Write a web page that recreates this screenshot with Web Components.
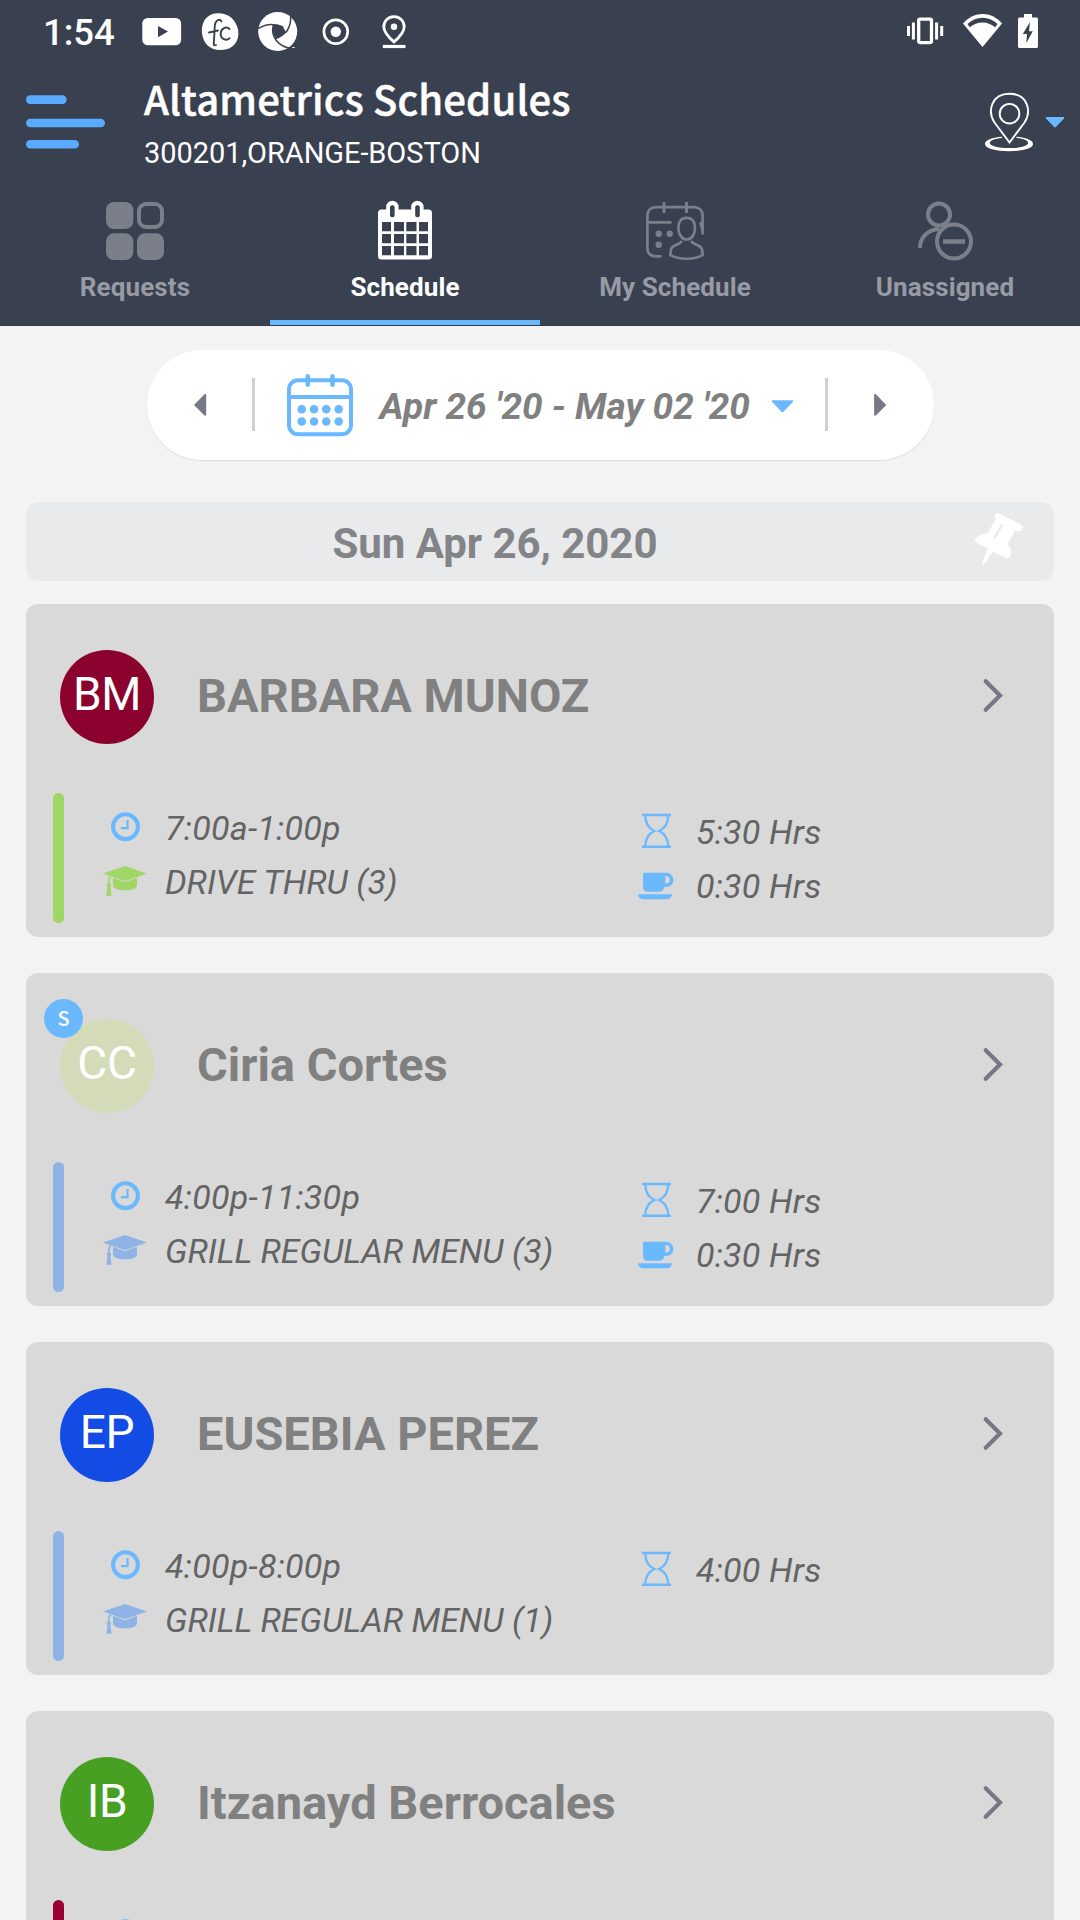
<!DOCTYPE html>
<html lang="en">
<head>
<meta charset="utf-8">
<title>Altametrics Schedules</title>
<style>
html,body{margin:0;height:1920px;overflow:hidden;background:#f3f3f3}
body{font-family:Roboto,sans-serif}
</style>
</head>
<body>
<schedule-app></schedule-app>
<script>
const ICONS = {
  youtube: ['141 0 42 60', '<rect x="142.3" y="18" width="38.8" height="27.3" rx="5.5" fill="#fff"/><path d="M158 26v11.2l10-5.6z" fill="#394050"/>'],
  fc: ['200 0 41 60', '<path d="M217 13.2c11-.6 19 6 21.200 17 1.500 11-5 19.600-17 19.800-11 .2-17.500-6-19-15.500C200.500 23 206 13.800 217 13.200z" fill="#fff"/><path d="M221.500 21.500c-2-3.200-6-1.500-6.700 4L213.800 44c-.1 1.600.8 1.600 2.200 1M209 32.500l9-2M229.500 29c-3-3-8.500-.8-8.800 4.200-.2 6 5.500 8.200 8.800 5" fill="none" stroke="#394050" stroke-width="1.900" stroke-linecap="round"/>'],
  aperture: ['257 0 42 60', '<circle cx="277.700" cy="31.500" r="19.500" fill="#fff"/><path d="M273.300 24.800c4-.6 7 .2 9.700 2.200l3.200 5.500c-3 3.300-6 5-10 6.700-3.200-4.200-3.800-9-2.900-14.400z" fill="#394050"/><g fill="none" stroke="#394050" stroke-width="1.500"><path d="M258.300 28.500c7-4.500 16-5.500 25-1.200"/><path d="M290.700 16.500c.3 6-1.200 11-4.700 16"/><path d="M273.300 25c-1.600 6-.3 11.500 3 15.500 3.700 4.500 9 7.200 15 8"/></g><path d="M292 47.500h3" stroke="#c7cad0"/>'],
  record: ['321 0 30 60', '<circle cx="335.800" cy="31.700" r="11.900" fill="none" stroke="#fff" stroke-width="2.700"/><circle cx="335.800" cy="31.700" r="5.200" fill="#fff"/>'],
  place: ['381 0 28 60', '<path d="M394 16.700c-6 0-10.200 4.500-10.200 10 0 5 4 9.800 10.200 15.200 6.200-5.400 10.200-10.200 10.200-15.200 0-5.500-4.200-10-10.200-10z" fill="none" stroke="#fff" stroke-width="2.800"/><circle cx="394" cy="26.800" r="3.200" fill="#fff"/><path d="M382.800 46.500h22.700" stroke="#fff" stroke-width="3.200"/>'],
  vibrate: ['905 0 40 60', '<rect x="918.700" y="19.200" width="12.800" height="23.400" rx="1.500" fill="none" stroke="#fff" stroke-width="3.300"/><path d="M908.500 26v10M913.400 22.500v17M936.600 22.500v17M941.700 26v10" stroke="#fff" stroke-width="3"/>'],
  wifi: ['961 0 44 60', '<path d="M963 23.500c11.500-12.600 28-12.600 39 0L982.500 47z" fill="#fff"/><path d="M967.500 24c9-8.400 21.300-8.400 30 0l-2.300 3.200c-7.500-6.300-18-6.300-25.400 0z" fill="#394050"/>'],
  battery: ['1017 0 22 60', '<path d="M1024 14h8v3.500h4.500a1.500 1.500 0 0 1 1.500 1.500v27.500a1.500 1.500 0 0 1-1.500 1.500h-17a1.500 1.500 0 0 1-1.500-1.500V19a1.500 1.500 0 0 1 1.500-1.500h4.500z" fill="#fff"/><path d="M1030 22l-7.200 12h4.200l-.7 9 6.500-11.700h-3.800z" fill="#394050"/>'],
  menu: ['26 90 80 64', '<g fill="#5aabff"><rect x="26" y="95.300" width="40.600" height="8.600" rx="4.300"/><rect x="26" y="118.700" width="79" height="8.600" rx="4.300"/><rect x="26" y="140" width="53" height="8.600" rx="4.300"/></g>'],
  location: ['984 90 50 64', '<g fill="none" stroke="#fff"><path d="M1009.500 142.500L994.500 122.500C987 111 991.500 93.800 1009.500 93.800S1032 111 1024.500 122.500z" stroke-width="1.900"/><circle cx="1009.500" cy="113.700" r="9.800" stroke-width="1.900"/></g><path d="M1002 136.800c-10 .7-17 3.500-17 7.200 0 4.300 10.500 7.200 24.300 7.200s23.700-2.900 23.700-7.200c0-3.700-7-6.500-16.500-7.200v1.300c7.500.6 11.600 2.600 11.600 5 0 2.900-7 5-18.800 5s-19.500-2.100-19.500-5c0-2.400 4.700-4.400 12.200-5z" fill="#fff"/>'],
  caret: ['1045 90 20 64', '<path d="M1046 117h18v1.500l-8.300 8.800h-1.400l-8.300-8.800z" fill="#6ab9ff"/>'],
  requests: ['106 202 58 58', '<g fill="#7b7f8a"><rect x="106" y="202" width="27.300" height="27" rx="8"/><rect x="106" y="233.300" width="27.300" height="26.700" rx="8"/><rect x="137" y="233.300" width="27" height="26.700" rx="8"/></g><rect x="139" y="204" width="23" height="23" rx="7" fill="none" stroke="#7b7f8a" stroke-width="4"/>'],
  schedule: ['376 200 58 60', '<path d="M378 213a3.500 3.500 0 0 1 3.500-3.500h4.700V207a6.200 6.200 0 0 1 12.400 0v2.500h12.600V207a6.200 6.200 0 0 1 12.400 0v2.500h4.900a3.500 3.500 0 0 1 3.500 3.500v43a3.500 3.500 0 0 1-3.500 3.500h-47a3.500 3.500 0 0 1-3.500-3.500z" fill="#fff"/><g fill="#394050"><rect x="390" y="205.300" width="4.600" height="12" rx="2"/><rect x="415.200" y="205.300" width="4.600" height="12" rx="2"/><path d="M382 222h9v9.300h-9zM394 222h10v9.300h-10zM406.300 222h10.200v9.300h-10.200zM419 222h9v9.300h-9zM382 234h9v9.300h-9zM394 234h10v9.300h-10zM406.300 234h10.200v9.300h-10.200zM419 234h9v9.300h-9zM382 246h9v9.300h-9zM394 246h10v9.300h-10zM406.300 246h10.200v9.300h-10.200zM419 246h9v9.300h-9z"/></g>'],
  mine: ['646 202 58 60', '<g fill="none" stroke="#7b7f8a" stroke-width="2.700"><path d="M661.500 256.300h-5.300c-5.500 0-8.800-3-8.800-8.300v-32c0-5.400 3.300-8.800 8.800-8.800h37.600c5.500 0 8.800 3.400 8.800 8.800v18M647.500 222.300h24M700.600 222l2 9.500v3"/><path d="M664 202v11M686.500 202v11" stroke-width="2.900"/><path d="M686.700 217.800c5.500 0 8.300 4 8.300 9.700 0 7-3.300 12-8.300 12s-8.300-5-8.300-12c0-5.700 2.800-9.700 8.300-9.700z"/><path d="M682 241c-2 3-5.200 3.200-8 5-2.700 1.600-3.600 3-3.600 9.200 8 4.700 24 4.700 32.200 0 0-6.200-.9-7.600-3.600-9.200-2.800-1.800-6-2-8-5"/></g><g fill="#7b7f8a"><circle cx="658.700" cy="233.700" r="3.200"/><circle cx="669.700" cy="233.700" r="3.200"/><circle cx="658.700" cy="244.800" r="3.200"/></g>'],
  unassigned: ['916 202 58 58', '<g fill="none" stroke="#7b7f8a" stroke-width="4"><circle cx="939" cy="214.500" r="11"/><circle cx="954" cy="241.500" r="17"/><path d="M920 248c0-10.500 7.500-18.500 19.500-19"/><path d="M943 241.500h22" stroke-width="4.500"/></g>'],
  left: ['194 393 13 24', '<path d="M194 405l10.200-10.500c1-.8 2-.5 2 1v19c0 1.300-1 1.600-2 .8z" fill="#757885"/>'],
  right: ['873 393 14 24', '<path d="M886.300 405l-10.200-10.500c-1-.8-2-.5-2 1v19c0 1.300 1 1.600 2 .8z" fill="#757885"/>'],
  calendar: ['286 373 68 64', '<rect x="289" y="380.200" width="62" height="54" rx="9" fill="none" stroke="#6ab9ff" stroke-width="4"/><path d="M289 397h62" stroke="#6ab9ff" stroke-width="4"/><path d="M307.800 376.200v8.500M332.500 376.200v8.500" stroke="#6ab9ff" stroke-width="4.400" stroke-linecap="round"/><g fill="#6ab9ff"><circle cx="301.700" cy="409.300" r="4.300"/><circle cx="314" cy="409.300" r="4.300"/><circle cx="326.300" cy="409.300" r="4.300"/><circle cx="338.700" cy="409.300" r="4.300"/><circle cx="301.700" cy="421.500" r="4.300"/><circle cx="314" cy="421.500" r="4.300"/><circle cx="326.300" cy="421.500" r="4.300"/><circle cx="338.700" cy="421.500" r="4.300"/></g>'],
  drop: ['771 392 23 24', '<path d="M772 399.300h21v1.500l-9.600 10.200h-1.800l-9.600-10.200z" fill="#6ab9ff"/>'],
  pin: ['974 511 50 55', '<path d="M996.800 513.300q1-.4 2 0l22.700 11.600q1.700 1 1.200 2.700-1.200 4-4.700 3.600l-2.700-.6-8 13.500c3 2.200 4.300 5.200 3.300 10q-.5 4-3.600 4.700l-14-7.200-8.300 12.100q-1.800 1.300-2.900.3l6-15.400-12.600-6.600q-.7-1.400.4-2.900c2.500-4 6.500-5.700 11.300-5.200l8.700-14.100q-2.600-5 1.200-6.500z" fill="#fff"/><path d="M1002 525l-7.200 12.500" stroke="#e8eaec" stroke-width="2.200" stroke-linecap="round"/>'],
  chevron: ['982 678 21 35', '<path d="M985.700 681.200l14.300 14.300-14.300 14.300" fill="none" stroke="#767984" stroke-width="4.200" stroke-linecap="round"/>'],
  clock: ['103 809 44 35', '<circle cx="125.500" cy="826.700" r="12.400" fill="none" stroke="#6ab9ff" stroke-width="4.100"/><path d="M127.500 820v8.200h-6.500" fill="none" stroke="#6ab9ff" stroke-width="2.200"/>'],
  cap: ['103 863 44 36', '<g fill="currentColor"><path d="M125 866l22 7.500-22 7.800-22-7.800z"/><path d="M113 877.800l12 4.400 12-4.400v7.800c-1 6.600-23 6.600-24 0z"/><path d="M111.800 877.200c-2 1.200-2.500 3.500-2 6.300 1.700 1.200 1.700 2.600.5 3.800l1.200 8.400h-5.200l1.200-8.400c-1.200-1.200-1-2.900.3-3.800 0-3.500.5-6 2.200-7.600z"/></g>'],
  hourglass: ['638 814 36 36', '<g fill="none" stroke="#6ab9ff"><path d="M642 815h29M642 846.800h29" stroke-width="2.500"/><path d="M645.300 815.500c0 8 3.500 13 9.200 15.500-5.700 2.500-9.200 7-9.200 15.500M668.200 815.500c0 8-3.500 13-9.200 15.500 5.700 2.500 9.200 7 9.200 15.500" stroke-width="2.300"/></g>'],
  cup: ['638 868 36 36', '<path d="M643 874q0-1.200 1.200-1.200h22.100a7.100 7.100 0 0 1 0 14.200h-2c-.6 3-2 4.700-5 4.700h-11.300c-3.500 0-5-1.900-5-5zM665.300 876v7.500h.7a3.700 3.700 0 0 0 0-7.500zM638.300 894.300h33.500c0 3.500-2.200 5-5.200 5h-23c-3.200 0-5.300-1.700-5.300-5z" fill="#6ab9ff" fill-rule="evenodd"/>']
};
class UiIcon extends HTMLElement {
  connectedCallback() {
    const [box, body] = ICONS[this.getAttribute('name')];
    const [, , w, h] = box.split(' ');
    this.attachShadow({mode: 'open'}).innerHTML =
      `<style>:host{display:block;flex:none}svg{display:block;overflow:visible}</style><svg width="${w}" height="${h}" viewBox="${box}">${body}</svg>`;
  }
}
const define = (tag, html) => customElements.define(tag, class extends HTMLElement {
  connectedCallback() {
    const t = document.createElement('template');
    t.innerHTML = typeof html === 'function' ? html(this) : html;
    this.attachShadow({mode: 'open'}).append(t.content.cloneNode(true));
  }
});
customElements.define('ui-icon', UiIcon);

define('status-bar', `<style>
:host{display:flex;height:60px;color:#fff;padding:0 41px 0 43px;justify-content:space-between}
div{display:flex}
.time{font-size:36.5px;font-weight:500;line-height:66px;width:98px;white-space:nowrap}
.l ui-icon+ui-icon{margin-left:17px}
.l .rec{margin-left:22px!important}.l .pl{margin-left:30px!important}
.wifi{margin-left:16px}.bat{margin-left:12px}
</style><div class="l"><span class="time">1:54</span><ui-icon name="youtube"></ui-icon><ui-icon name="fc"></ui-icon><ui-icon name="aperture" style="margin-left:16px"></ui-icon><ui-icon class="rec" name="record"></ui-icon><ui-icon class="pl" name="place"></ui-icon></div>
<div><ui-icon name="vibrate"></ui-icon><ui-icon class="wifi" name="wifi"></ui-icon><ui-icon class="bat" name="battery"></ui-icon></div>`);

define('app-bar', `<style>
:host{display:flex;height:128px;padding:0 15px 0 26px;color:#fff}
ui-icon{margin-top:30px}
.t{flex:1;margin-left:38px;display:flex;flex-direction:column;white-space:nowrap}
.title{font:500 40px/52px "Noto Sans CJK SC",sans-serif;margin-top:12px;letter-spacing:.15px;-webkit-text-stroke:.5px #fff}
.sub{font-size:29px;line-height:34px;margin-top:12px;letter-spacing:-.06px}
.c{margin-left:11px}
</style><ui-icon name="menu"></ui-icon><div class="t"><span class="title"><slot></slot></span><span class="sub"><slot name="sub"></slot></span></div><ui-icon name="location"></ui-icon><ui-icon class="c" name="caret"></ui-icon>`);

define('nav-tab', e => `<style>
:host{flex:1;display:flex;flex-direction:column;align-items:center;box-sizing:border-box;height:137px;border-bottom:5px solid transparent;color:#989ba3}
:host([active]){color:#fff;border-color:#6ab9ff}
.i{height:60px;margin-top:12px;display:flex;align-items:flex-start;padding-top:0}
.i ui-icon{margin-top:2px}
:host([active]) .i ui-icon{margin-top:0}
span{font-weight:700;font-size:26px;line-height:30px;margin-top:12px;white-space:nowrap;letter-spacing:.1px}
</style><div class="i"><ui-icon name="${e.getAttribute('icon')}"></ui-icon></div><span><slot></slot></span>`);

define('date-range', `<style>
:host{display:flex;align-items:center;box-sizing:border-box;width:787px;height:110px;margin:24px auto 0;border-radius:55px;background:#fff;box-shadow:0 1px 1px #dcdcdc;padding-left:47px}
i{width:3px;height:53px;background:#d0d0d0;margin-top:-1px}
b{font-size:37px;line-height:44px;font-style:italic;color:#808080;width:391px;margin-left:26px;padding-top:3px;white-space:nowrap}
</style><ui-icon name="left"></ui-icon><i style="margin-left:45px"></i><ui-icon name="calendar" style="margin-left:31px"></ui-icon><b><slot></slot></b><ui-icon name="drop"></ui-icon><i style="margin-left:31px"></i><ui-icon name="right" style="margin-left:45px"></ui-icon>`);

define('day-bar', `<style>
:host{display:flex;height:79px;margin:42px 26px 0;border-radius:13px;background:#e8eaec}
b{flex:1;text-align:center;font-size:42px;line-height:83px;color:#838487;letter-spacing:-.05px;padding-left:1px}
ui-icon{margin:9px 30px 0 11px}
</style><b><slot></slot></b><ui-icon name="pin"></ui-icon>`);

define('shift-card', e => {
  const a = n => e.getAttribute(n);
  return `<style>
:host{display:block;flex:none;height:333px;border-radius:12px;background:#d9d9d9}
.head{display:flex;align-items:center;height:186px;padding:0 51px 0 34px}
.av{position:relative;width:94px;height:94px;border-radius:50%;background:${a('color')};color:#fff;font-size:46px;line-height:88px;text-align:center;letter-spacing:-.3px;margin-bottom:1px}
.badge{position:absolute;left:-16px;top:-20px;width:39px;height:39px;border-radius:50%;background:#6ab9ff;font:500 20px/38px "Noto Sans CJK SC",sans-serif}
.name{flex:1;margin-left:43px;font-size:47px;line-height:54px;font-weight:700;color:#808080;padding-bottom:2px;white-space:nowrap}
.chev{margin-bottom:3px}
.body{display:flex;padding:3px 0 0 27px}
.bar{width:11px;height:130px;border-radius:6px;background:${a('bar')}}
.col{display:flex;flex-direction:column;padding-top:8px;font-size:34px;font-style:italic;color:#646464}
.col.a{width:535px;margin-left:39px}.col.b{padding-top:12px}
.row{display:flex;height:54px;align-items:center;gap:18px;white-space:nowrap}
.b .row{gap:22px;letter-spacing:.2px}
.job{letter-spacing:-.03px}
.job ui-icon{color:${a('bar')};margin-bottom:2px}
.tm{letter-spacing:.25px}
.tm ui-icon{margin-bottom:4px}
</style><div class="head"><div class="av">${a('initials')}${a('badge') ? `<span class="badge">${a('badge')}</span>` : ''}</div><div class="name"><slot></slot></div><ui-icon class="chev" name="chevron"></ui-icon></div>
<div class="body"><div class="bar"></div><div class="col a"><div class="row tm"><ui-icon name="clock"></ui-icon><span>${a('time')}</span></div><div class="row job"><ui-icon name="cap"></ui-icon><span>${a('job')}</span></div></div>
<div class="col b"><div class="row"><ui-icon name="hourglass"></ui-icon><span>${a('hours')}</span></div>${a('rest') ? `<div class="row"><ui-icon name="cup"></ui-icon><span>${a('rest')}</span></div>` : ''}</div></div>`;
});

define('schedule-app', `<style>
:host{display:block;width:1080px;height:1920px;overflow:hidden;background:#f3f3f3}
header{background:#394050;height:325px;border-bottom:1px solid #333a49}
nav{display:flex}
main{display:flex;flex-direction:column;gap:36px;margin:23px 26px 0}
</style>
<header><status-bar></status-bar>
<app-bar>Altametrics Schedules<span slot="sub">300201,ORANGE-BOSTON</span></app-bar>
<nav><nav-tab icon="requests">Requests</nav-tab><nav-tab icon="schedule" active>Schedule</nav-tab><nav-tab icon="mine">My Schedule</nav-tab><nav-tab icon="unassigned">Unassigned</nav-tab></nav></header>
<date-range>Apr 26 '20 - May 02 '20</date-range>
<day-bar>Sun Apr 26, 2020</day-bar>
<main>
<shift-card initials="BM" color="#8b022e" bar="#a0d665" time="7:00a-1:00p" job="DRIVE THRU (3)" hours="5:30 Hrs" rest="0:30 Hrs">BARBARA MUNOZ</shift-card>
<shift-card initials="CC" badge="S" color="#d4dbb8" bar="#8eb3e4" time="4:00p-11:30p" job="GRILL REGULAR MENU (3)" hours="7:00 Hrs" rest="0:30 Hrs">Ciria Cortes</shift-card>
<shift-card initials="EP" color="#134ce4" bar="#8eb3e4" time="4:00p-8:00p" job="GRILL REGULAR MENU (1)" hours="4:00 Hrs">EUSEBIA PEREZ</shift-card>
<shift-card initials="IB" color="#48a023" bar="#990033" time="" job="" hours="">Itzanayd Berrocales</shift-card>
</main>`);
</script>
</body>
</html>
